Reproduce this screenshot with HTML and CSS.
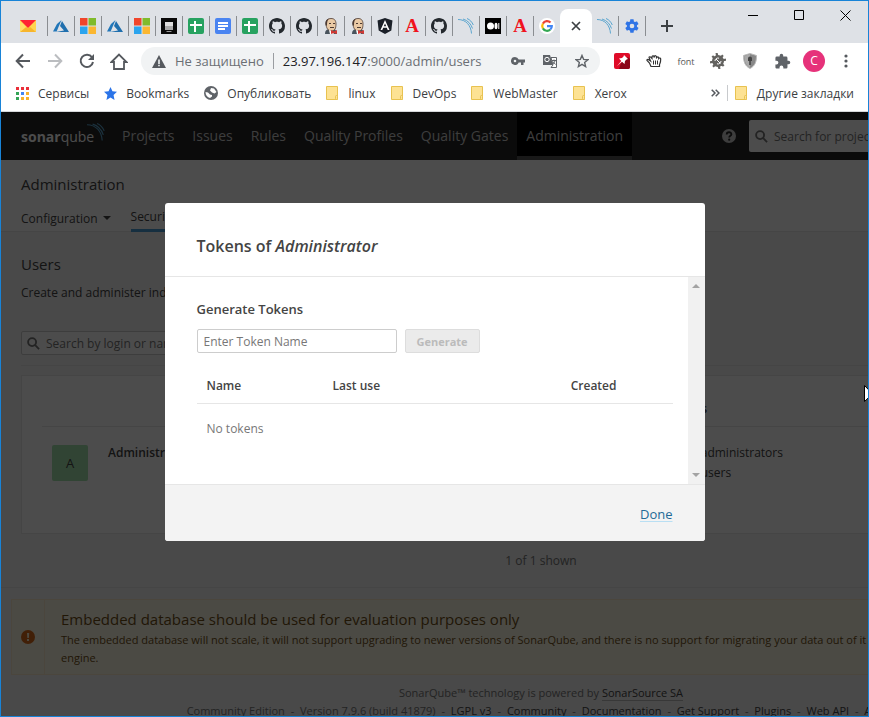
FILE: index.html
```html
<!DOCTYPE html>
<html lang="ru">
<head>
<meta charset="utf-8">
<title>Users - Administration</title>
<link rel="stylesheet" href="styles.css">
</head>
<body>
<svg class="defs" aria-hidden="true">
  <symbol id="mail" viewBox="0 0 16 12"><path fill="#ffd44f" d="M0 0h16v12H0z"/><path fill="#f7b52c" d="M0 12l6-5 2 1.500 2-1.500 6 5z"/><path fill="#ffdd69" d="M0 1l6 6-6 5z"/><path fill="#f23" d="M0 0h16L8 8z"/></symbol>
  <symbol id="azure" viewBox="0 0 16 16"><path fill="#2277b9" d="M8.500 2L4 6 0 13.500h3.600z"/><path fill="#1f6fae" d="M9 3l7 11H3l8-1.500L7 8z"/></symbol>
  <symbol id="ms" viewBox="0 0 16 16"><path fill="#f0452b" d="M0 0h7.500v7.500H0z"/><path fill="#80bb2b" d="M8.500 0H16v7.500H8.500z"/><path fill="#2ba4ee" d="M0 8.500h7.500V16H0z"/><path fill="#fbb731" d="M8.500 8.500H16V16H8.500z"/></symbol>
  <symbol id="device" viewBox="0 0 16 16"><path fill="#090909" d="M0 0h16v16H0z"/><path fill="#ddd" d="M4 4h8v4H4z"/><path fill="#aaa" d="M4 8h8v4H4z"/><path fill="#999" d="M5.500 13h5v1h-5z"/></symbol>
  <symbol id="sheet" viewBox="0 0 16 16"><rect width="16" height="16" rx="2" fill="#27a260"/><path fill="#fff" d="M6 3h2v3h6v2H8v6H6V8H2V6h4z"/></symbol>
  <symbol id="doc" viewBox="0 0 16 16"><rect width="16" height="16" rx="2" fill="#4a84f1"/><path fill="#fff" d="M3 4h10v2H3zm0 3h10v2H3zm0 3h7v2H3z"/></symbol>
  <symbol id="github" viewBox="0 0 16 16"><path fill="#24292e" d="M8 0C3.580 0 0 3.580 0 8c0 3.540 2.290 6.530 5.470 7.590.4.070.55-.17.55-.38 0-.19-.01-.82-.01-1.490-2.010.37-2.530-.49-2.690-.94-.09-.23-.48-.94-.82-1.130-.28-.15-.68-.52-.01-.53.63-.01 1.080.58 1.230.82.72 1.210 1.870.87 2.330.66.07-.52.28-.87.51-1.070-1.780-.2-3.640-.89-3.640-3.950 0-.87.31-1.590.82-2.150-.08-.2-.36-1.020.08-2.120 0 0 .67-.21 2.200.82.64-.18 1.320-.27 2-.27s1.360.09 2 .27c1.530-1.040 2.200-.82 2.200-.82.44 1.100.16 1.920.08 2.120.51.56.82 1.270.82 2.150 0 3.070-1.870 3.750-3.650 3.950.29.25.54.73.54 1.480 0 1.070-.01 1.930-.01 2.200 0 .21.15.46.55.38A8.010 8.010 0 0 0 16 8c0-4.420-3.580-8-8-8z"/></symbol>
  <symbol id="jenkins" viewBox="0 0 16 16"><path fill="#49545d" d="M2 16c0-4 2-5 6-5s6 1 6 5z"/><path fill="#e9c9a4" stroke="#4c3a32" stroke-width=".8" d="M3 5c0-3 2-4.500 5-4.500S13 2 13 6c0 4-1 7-4.500 7C5 13 3 10 3 5z"/><path fill="#4c3a32" d="M3 8C1.500 5 3 1 6 .8 4.500 2 4 4 4 7zM6 5h2v1H6zm4 0h2v1h-2zM7 9h4v1H7z"/><path fill="#fff" d="M6 12l3 1 2 3H7z"/><path fill="#d33833" d="M8 12l3 1.500 3-1.500v4l-3-1-3 1z"/></symbol>
  <symbol id="angular" viewBox="0 0 16 16"><path fill="#1b2028" d="M8 0l7.500 2.600-1.200 10L8 16l-6.300-3.400-1.200-10z"/><path fill="#fff" fill-rule="evenodd" d="M8 2l4.500 10h-1.800l-.9-2.200H6.200L5.300 12H3.500zm0 3.500L6.800 8.300h2.400z"/></symbol>
  <symbol id="sonar" viewBox="0 0 16 16"><g fill="none" stroke="#5ba5cf" stroke-width="1"><path d="M0 1.500c8 0 13 6 13.500 14"/><path d="M5 1c5 1.500 8 5 9.500 9.500"/><path d="M9 .5c3 1.200 5 3.500 6.300 6.500"/></g></symbol>
  <symbol id="medium" viewBox="0 0 16 16"><path d="M0 0h16v16H0z"/><circle cx="5.500" cy="8" r="3.500" fill="#fff"/><ellipse cx="11" cy="8" rx="1.500" ry="3.300" fill="#fff"/><path fill="#fff" d="M13.300 5h1v6h-1z"/></symbol>
  <symbol id="google" viewBox="0 0 16 16"><circle cx="8" cy="8" r="8" fill="#fff"/><g fill="none" stroke-width="2.200"><path stroke="#ea4335" d="M3.900 5.600A4.800 4.800 0 0 1 11.500 4.600"/><path stroke="#fbbc05" d="M3.900 5.600a4.800 4.800 0 0 0 0 4.800"/><path stroke="#34a853" d="M3.900 10.400a4.800 4.800 0 0 0 7.400 1.100"/><path stroke="#4285f4" d="M11.300 11.500A4.700 4.700 0 0 0 12.800 8.200H8"/></g></symbol>
  <symbol id="gear" viewBox="0 0 24 24"><path fill="#2f74e6" fill-rule="evenodd" d="M19.400 13a7.500 7.500 0 0 0 0-2l2.100-1.600c.2-.2.300-.4.100-.7l-2-3.400c-.1-.3-.4-.3-.6-.2l-2.500 1a7.300 7.300 0 0 0-1.700-1L14.400 2.400c0-.2-.2-.4-.5-.4h-4c-.3 0-.5.200-.5.400L9 5.100c-.6.200-1.200.6-1.700 1l-2.500-1c-.2-.1-.5 0-.6.200l-2 3.400c-.2.300-.1.500.1.700L4.400 11a7.500 7.500 0 0 0 0 2l-2.100 1.600c-.2.200-.3.400-.1.700l2 3.400c.1.300.4.300.6.200l2.500-1c.5.400 1.100.8 1.700 1l.4 2.700c0 .2.200.4.500.4h4c.3 0 .5-.2.500-.4l.4-2.700c.6-.2 1.200-.6 1.700-1l2.500 1c.2.100.5 0 .6-.2l2-3.400c.2-.3.100-.5-.1-.7zM12 15.500a3.500 3.500 0 1 1 0-7 3.500 3.500 0 0 1 0 7z"/></symbol>
  <symbol id="folder" viewBox="0 0 13 15"><path fill="#fde293" stroke="#e8c250" d="M.5.500h11v13H.5z"/><rect x="9.500" y="9.500" width="2" height="4" rx="1" fill="#fde293" stroke="#e8c250"/></symbol>
  <symbol id="search" viewBox="0 0 14 14"><g fill="none" stroke="currentColor" stroke-width="2"><circle cx="5.500" cy="5.500" r="4.300"/><path d="M8.800 8.800L13 13"/></g></symbol>
</svg>

<div class="browser">
  <header class="tabstrip">
    <nav class="tabs" aria-label="Tabs">
      <span class="tab first"><svg width="16" height="12"><use href="#mail"/></svg></span>
      <span class="tab"><svg class="fav"><use href="#azure"/></svg></span>
      <span class="tab"><svg class="fav"><use href="#ms"/></svg></span>
      <span class="tab"><svg class="fav"><use href="#azure"/></svg></span>
      <span class="tab"><svg class="fav"><use href="#ms"/></svg></span>
      <span class="tab"><svg class="fav"><use href="#device"/></svg></span>
      <span class="tab"><svg class="fav"><use href="#sheet"/></svg></span>
      <span class="tab"><svg class="fav"><use href="#doc"/></svg></span>
      <span class="tab"><svg class="fav"><use href="#sheet"/></svg></span>
      <span class="tab"><svg class="fav"><use href="#github"/></svg></span>
      <span class="tab"><svg class="fav"><use href="#github"/></svg></span>
      <span class="tab"><svg class="fav"><use href="#jenkins"/></svg></span>
      <span class="tab"><svg class="fav"><use href="#jenkins"/></svg></span>
      <span class="tab"><svg class="fav"><use href="#angular"/></svg></span>
      <span class="tab letter">A</span>
      <span class="tab"><svg class="fav"><use href="#github"/></svg></span>
      <span class="tab"><svg class="fav"><use href="#sonar"/></svg></span>
      <span class="tab"><svg class="fav"><use href="#medium"/></svg></span>
      <span class="tab letter">A</span>
      <span class="tab last"><svg class="fav"><use href="#google"/></svg></span>
      <button class="tab active" aria-label="Close tab"><svg width="10" height="10" viewBox="0 0 10 10"><path d="M1 1l8 8M9 1L1 9" stroke="#3c4043" stroke-width="1.700"/></svg></button>
      <span class="tab"><svg class="fav"><use href="#sonar"/></svg></span>
      <span class="tab"><svg class="fav"><use href="#gear"/></svg></span>
      <button class="newtab" aria-label="New tab"><svg width="12" height="12" viewBox="0 0 12 12"><path d="M6 0v12M0 6h12" stroke="#3c4043" stroke-width="2"/></svg></button>
    </nav>
    <div class="winbtns">
      <button aria-label="Minimize"><svg width="11" height="11"><path d="M0 5.500h10" stroke="#000"/></svg></button>
      <button aria-label="Maximize"><svg width="11" height="11"><path d="M.5.500h9v9h-9z" fill="none" stroke="#000"/></svg></button>
      <button aria-label="Close"><svg width="11" height="11"><path d="M.5.500l10 10M10.500.500l-10 10" stroke="#000"/></svg></button>
    </div>
  </header>

  <div class="toolbar">
    <button class="tool" aria-label="Back"><svg width="16" height="16" viewBox="0 0 16 16"><path d="M15 8H2M8 1.500L1.700 8 8 14.500" fill="none" stroke="#55595e" stroke-width="2"/></svg></button>
    <button class="tool" aria-label="Forward"><svg width="16" height="16" viewBox="0 0 16 16"><path d="M1 8h13M8 1.500L14.300 8 8 14.500" fill="none" stroke="#bbbdc0" stroke-width="2"/></svg></button>
    <button class="tool" aria-label="Reload"><svg width="16" height="16" viewBox="0 0 16 16"><path d="M13 4.300A6.200 6.200 0 1 0 14 9" fill="none" stroke="#55595e" stroke-width="2"/><path d="M15 1v6H9z" fill="#55595e"/></svg></button>
    <button class="tool" aria-label="Home"><svg width="18" height="17" viewBox="0 0 18 17"><path d="M1.500 9L9 1.500 16.500 9H14v7H4V9z" fill="none" stroke="#55595e" stroke-width="1.800"/></svg></button>
    <div class="omnibox">
      <svg width="14" height="13" viewBox="0 0 14 13"><path fill="#55595e" d="M7 0l7 13H0z"/><path fill="#f1f3f4" d="M6.200 4.500h1.600V9H6.200zm0 5.200h1.600v1.500H6.200z"/></svg>
      <span class="insecure">Не защищено</span>
      <span class="rule"></span>
      <span class="url"><span class="host">23.97.196.147</span>:9000/admin/users</span>
      <svg width="14" height="8" viewBox="0 0 14 8"><path fill="#5f6368" fill-rule="evenodd" d="M4 0a4 4 0 0 1 3.700 2.500H14v3h-1.500V8H10V5.500H7.700A4 4 0 1 1 4 0zm0 2.700a1.300 1.300 0 1 0 0 2.600 1.300 1.300 0 0 0 0-2.600z"/></svg>
      <svg width="14" height="14" viewBox="0 0 14 14"><path fill="#5f6368" d="M0 1h7l3 10H0z"/><path fill="#fff" stroke="#5f6368" d="M8 3.500h5.500v10H8L10 11z"/><circle cx="4" cy="5.500" r="2.200" fill="none" stroke="#fff"/><path stroke="#5f6368" fill="none" d="M9 6.500h4M11 5.500v1M12.500 6.500l-3 4M10 7.500l2.500 3"/></svg>
      <svg width="14" height="14" viewBox="0 0 24 24"><path d="M12 2.500l2.800 6.700 7.200.6-5.500 4.700 1.700 7.100L12 17.800l-6.200 3.800 1.700-7.100L2 9.800l7.200-.6z" fill="none" stroke="#5f6368" stroke-width="2.400"/></svg>
    </div>
    <button class="tool" aria-label="Pin"><svg width="16" height="16" viewBox="0 0 16 16"><rect width="16" height="16" rx="2" fill="#df0b28"/><path fill="#8c0417" d="M7 10l7-6 2 2v8a2 2 0 0 1-2 2H5z"/><path fill="#fff" d="M10 2l4 4-1.500.5L11 8l-.5 3L8 8.700 3 13l4.300-5L5 5.500 8 5l1.500-1.500z"/></svg></button>
    <button class="tool" aria-label="Grab"><svg width="17" height="14" viewBox="0 0 17 14"><path d="M5 12.500L3.500 9 1 6.500c-.5-1 .8-1.500 1.800-.8L4.500 7 3 3.500c0-1 1.500-1 2 0L6 4.500V2.500c.5-1 1.800-.8 2 0v1l.5-1.300c.5-.8 1.700-.5 1.900.3l.1 1.200.6-.5c.7-.6 1.600 0 1.600.8v.5c.8-1 2-.3 2 .5 0 4-.7 4-1.200 5.500v2z" fill="#fff" stroke="#333" stroke-width="1.200"/><path d="M7.500 6.500v4M9.500 6.500v4M11.500 6.500v4" stroke="#333"/></svg></button>
    <button class="tool font">font</button>
    <button class="tool" aria-label="Settings"><svg width="16" height="16" viewBox="0 0 16 16"><circle cx="8" cy="8" r="6" fill="#63625f"/><g stroke="#63625f" stroke-width="2.200"><path d="M6.500 0l.8 3M8.700 13l.8 3M0 9.500l3-.8M13 7.300l3-.8M2.300 3l2 2M11.700 11l2 2M3 13.700l2-2M11 4.300l2-2"/></g><path d="M5 8a3 3 0 0 1 4-2.800M11 8a3 3 0 0 1-4 2.800M6 6l4.500 4.500" stroke="#fff" fill="none"/></svg></button>
    <button class="tool" aria-label="Shield"><svg width="14" height="16" viewBox="0 0 14 16"><path d="M7 .5l6.500 2C13.500 9 12 13 7 15.500 2 13 .5 9 .5 2.500z" fill="#888" stroke="#bbb"/><path d="M7 1v14C3 12.500 1.500 9 1.200 3z" fill="#aaa"/><path d="M6.200 7h1.600v5H6.200zM5 5.500a2 2 0 1 1 4 0V8H5z" fill="#444"/></svg></button>
    <button class="tool" aria-label="Extensions"><svg width="17" height="17" viewBox="0 0 24 24"><path fill="#5f6368" d="M20.500 11H19V7a2 2 0 0 0-2-2h-4V3.500a2.500 2.500 0 0 0-5 0V5H4a2 2 0 0 0-2 2v3.800h1.500a2.700 2.700 0 0 1 0 5.400H2V20c0 1.100.9 2 2 2h3.800v-1.500a2.700 2.700 0 0 1 5.400 0V22H17a2 2 0 0 0 2-2v-4h1.500a2.500 2.500 0 0 0 0-5z"/></svg></button>
    <button class="tool" aria-label="Profile"><span class="profile">C</span></button>
    <button class="tool" aria-label="Menu"><svg width="4" height="14"><g fill="#55595e"><circle cx="2" cy="2" r="1.600"/><circle cx="2" cy="7" r="1.600"/><circle cx="2" cy="12" r="1.600"/></g></svg></button>
  </div>

  <nav class="bookmarks" aria-label="Bookmarks">
    <a href="#"><svg width="13" height="13"><g><path fill="#ea2f39" d="M0 0h3v3H0zM5 0h3v3H5zM10 0h3v3h-3z"/><path fill="#33a456" d="M0 5h3v3H0zM0 10h3v3H0z"/><path fill="#4285f4" d="M5 5h3v3H5z"/><path fill="#f8b12c" d="M10 5h3v3h-3zM5 10h3v3H5zM10 10h3v3h-3z"/></g></svg>Сервисы</a>
    <a href="#"><svg width="13" height="13" viewBox="0 0 20 20"><path fill="#2b74e8" d="M10 0l3 6.700 7 .7-5.300 4.800L16.200 20 10 16l-6.200 4 1.500-7.800L0 7.400l7-.7z"/></svg>Bookmarks</a>
    <a href="#"><svg width="14" height="14" viewBox="0 0 14 14"><circle cx="7" cy="7" r="7" fill="#5f6368"/><path fill="#fff" d="M1.500 6l2.500.5L6 8.500l2 .5v1.500L6 12C3.500 11.500 1.500 9 1.500 6zM7 2l3 .5 2.500 3.500-2 1.500L8 6.500 6 4.500z"/></svg>Опубликовать</a>
    <a href="#"><svg class="folder"><use href="#folder"/></svg>linux</a>
    <a href="#"><svg class="folder"><use href="#folder"/></svg>DevOps</a>
    <a href="#"><svg class="folder"><use href="#folder"/></svg>WebMaster</a>
    <a href="#"><svg class="folder"><use href="#folder"/></svg>Xerox</a>
    <button class="more" aria-label="More bookmarks"><svg width="9" height="8" viewBox="0 0 9 8"><path d="M.7.700L4 4 .7 7.300M4.700.700L8 4 4.700 7.300" fill="none" stroke="#55595e" stroke-width="1.500"/></svg></button>
    <a class="other" href="#"><svg class="folder"><use href="#folder"/></svg>Другие закладки</a>
  </nav>

  <div class="viewport">
    <div class="page">
      <header class="global">
        <a class="logo" href="#"><b>sonar</b>qube<svg width="18" height="18" viewBox="0 0 16 16"><use href="#sonar"/></svg></a>
        <nav class="menu">
          <a href="#">Projects</a><a href="#">Issues</a><a href="#">Rules</a><a href="#">Quality Profiles</a><a href="#">Quality Gates</a><a class="current" href="#">Administration</a>
        </nav>
        <div class="right">
          <svg width="14" height="14" viewBox="0 0 14 14"><circle cx="7" cy="7" r="7" fill="#ccc"/><path d="M4.700 5.500C4.700 2.500 9.400 2.600 9.400 5.200 9.400 6.800 7.200 6.700 7.200 8.500" stroke="#262626" stroke-width="1.800" fill="none"/><circle cx="7.200" cy="10.700" r="1.100" fill="#262626"/></svg>
          <label class="find"><svg width="13" height="13"><use href="#search"/></svg><input type="search" aria-label="Search" placeholder="Search for projects, sub-projects and files..."></label>
        </div>
      </header>
      <header class="context">
        <h1>Administration</h1>
        <nav><a href="#">Configuration<i class="caret"></i></a><a class="current" href="#">Security<i class="caret"></i></a></nav>
      </header>
      <main class="users">
        <h2>Users</h2>
        <p>Create and administer individual users.</p>
        <div class="filters">
          <label class="find small"><svg width="13" height="13"><use href="#search"/></svg><input type="search" aria-label="Search users" placeholder="Search by login or name..."></label>
        </div>
        <div class="panel">
          <table>
            <thead><tr><th></th><th></th><th>SCM Accounts</th><th>Groups</th></tr></thead>
            <tbody><tr><td><span class="avatar">A</span></td><td><strong>Administrator</strong></td><td></td><td>sonar-administrators<br>sonar-users</td></tr></tbody>
          </table>
        </div>
        <p class="count">1 of 1 shown</p>
      </main>
      <footer>
        <div class="warning">
          <div class="sign"><svg width="14" height="14"><circle cx="7" cy="7" r="7" fill="#d9691a"/><path fill="#fff3d6" d="M6 3h2.200l-.3 5H6.300zM6 9h2v2H6z"/></svg></div>
          <div class="message">
            <h3>Embedded database should be used for evaluation purposes only</h3>
            <p>The embedded database will not scale, it will not support upgrading to newer versions of SonarQube, and there is no support for migrating your data out of it into a different database engine.</p>
          </div>
        </div>
        <p>SonarQube™ technology is powered by <a class="lined" href="#">SonarSource SA</a></p>
        <p class="links">Community Edition <i>-</i> Version 7.9.6 (build 41879) <i>-</i> <a href="#">LGPL v3</a> <i>-</i> <a href="#">Community</a> <i>-</i> <a href="#">Documentation</a> <i>-</i> <a href="#">Get Support</a> <i>-</i> <a href="#">Plugins</a> <i>-</i> <a href="#">Web API</a> <i>-</i> <a href="#">About</a></p>
      </footer>
    </div>

    <div class="overlay">
      <section class="modal" role="dialog" aria-labelledby="tokens-title">
        <header><h2 id="tokens-title">Tokens of <em>Administrator</em></h2></header>
        <div class="body">
          <div class="content">
            <h3>Generate Tokens</h3>
            <form>
              <input type="text" aria-label="Token name" placeholder="Enter Token Name">
              <button type="button" disabled>Generate</button>
            </form>
            <table>
              <thead><tr><th class="name">Name</th><th class="last">Last use</th><th class="created">Created</th><th></th></tr></thead>
              <tbody><tr><td colspan="4">No tokens</td></tr></tbody>
            </table>
          </div>
          <div class="scrollbar" aria-hidden="true"><i class="up"></i><i class="down"></i></div>
        </div>
        <footer><a href="#">Done</a></footer>
      </section>
    </div>
    <svg class="cursor" width="12" height="19" viewBox="0 0 12 19" aria-hidden="true"><path d="M.5.500v16l3.700-3.500 2.300 5.300 2.300-1-2.300-5.300h5z" fill="#fff" stroke="#000"/></svg>
  </div>
</div>
</body>
</html>
```

FILE: styles.css
```css
* { box-sizing: border-box; }
body { margin: 0; font-family: "Open Sans", "Noto Sans", sans-serif; font-size: 12px; color: #444; }
h1, h2, h3, p { margin: 0; font-weight: 400; }
a { color: inherit; text-decoration: none; }
button { padding: 0; border: 0; background: none; font-family: inherit; color: inherit; }
input { font-family: inherit; font-size: 12px; color: #444; min-width: 0; }
svg { flex: none; display: block; }
.defs { display: none; }

.browser { display: flex; flex-direction: column; height: 100vh; border: 1px solid #1883d7; overflow: hidden; background: #fff; }

/* Tab strip */
.tabstrip { display: flex; justify-content: space-between; background: #dee1e6; height: 42px; flex: none; }
.tabs { display: flex; padding: 8px 0 0 7px; }
.tab { position: relative; display: flex; align-items: center; justify-content: center; width: 27px; height: 34px; padding-right: 1px; }
.tab::after { content: ""; position: absolute; right: 0; top: 7px; height: 20px; width: 1px; background: #8a8d91; }
.tab.first { width: 40px; padding: 0; }
.tab.last { width: 26px; padding: 0; }
.tab.last::after, .tab.active::after { display: none; }
.tab.active { width: 32px; padding: 0; background: #fff; border-radius: 8px 8px 0 0; }
.fav { width: 16px; height: 16px; }
.letter { color: #f0141e; font: bold 19px/34px "Liberation Serif", serif; }
.newtab { width: 42px; display: flex; align-items: center; justify-content: center; }
.winbtns { display: flex; height: 29px; }
.winbtns button { width: 46px; display: flex; align-items: center; justify-content: center; }

/* Toolbar */
.toolbar { display: flex; align-items: center; height: 36px; flex: none; padding: 0 6px; }
.tool { width: 32px; height: 32px; display: flex; align-items: center; justify-content: center; flex: none; }
.font { font-size: 9px; color: #555; }
.profile { width: 22px; height: 22px; border-radius: 50%; background: #e6327a; color: #fff; font-size: 12px; line-height: 22px; }
.omnibox { flex: 1; display: flex; align-items: center; height: 28px; margin: 0 6px; padding: 0 11px; border-radius: 14px; background: #f1f3f4; font-size: 13px; color: #6b6f74; white-space: nowrap; gap: 18px; }
.insecure { margin-left: -9px; }
.rule { width: 1px; height: 16px; background: #9a9da1; margin: 0 -9px; }
.url { flex: 1; }
.host { color: #202124; }

/* Bookmarks */
.bookmarks { display: flex; align-items: center; gap: 15px; height: 33px; flex: none; padding: 0 14px 4px 15px; border-bottom: 1px solid #d5d7da; color: #3c4043; white-space: nowrap; }
.bookmarks a { display: flex; align-items: center; gap: 9px; }
.folder { width: 13px; height: 15px; }
.more { margin-left: auto; }
.other { position: relative; }
.other::before { content: ""; position: absolute; left: -8px; top: 0; width: 1px; height: 16px; background: #c8cacd; }

/* Page */
.viewport { position: relative; flex: 1; min-height: 0; overflow: hidden; background: #f3f3f3; }
.page { min-width: 1080px; }
.global { display: flex; align-items: center; height: 48px; padding-left: 20px; background: #262626; color: #ccc; }
.logo { display: flex; align-items: center; width: 92px; color: #fff; font-size: 14px; }
.logo svg { margin: 0 0 8px -7px; }
.menu { display: flex; font-size: 14px; }
.menu a { height: 48px; line-height: 48px; padding: 0 9px; }
.menu .current { background: #000; border-bottom: 4px solid #555; }
.right { display: flex; align-items: center; gap: 13px; width: 359px; margin-left: auto; }
.find { display: flex; align-items: center; gap: 6px; flex: 1; height: 32px; padding: 0 6px; border-radius: 2px; background: #fff; color: #777; }
.find input { flex: 1; border: 0; outline: 0; background: none; padding: 0; }
.find input::placeholder { color: #777; opacity: 1; }
.context { background: #fff; height: 72px; padding: 12px 20px 0; border-bottom: 1px solid #e6e6e6; }
.context h1 { font-size: 15px; line-height: 24px; }
.context nav { display: flex; gap: 20px; margin-top: 8px; }
.context nav a { display: flex; align-items: center; gap: 5px; height: 28px; }
.context .current { border-bottom: 3px solid #4b9fd5; }
.caret { border: 4px solid transparent; border-top-color: #444; border-bottom: 0; }
.users { padding: 19px 20px 16px; border-bottom: 1px solid #e6e6e6; }
.users h2 { font-size: 15px; line-height: 26px; }
.users p { line-height: 20px; margin-top: 6px; }
.filters { margin-top: 28px; padding-bottom: 10px; border-bottom: 1px solid #e6e6e6; }
.find.small { width: 300px; height: 24px; padding: 0 5px; border: 1px solid #cdcdcd; }
.panel { margin-top: 9px; padding: 15px 20px 50px; background: #fff; border: 1px solid #e6e6e6; }
.panel table { width: 100%; border-collapse: collapse; table-layout: fixed; }
.panel th { height: 35px; padding: 0 10px; text-align: left; font-weight: 600; border-bottom: 1px solid #e6e6e6; }
.panel th:nth-child(1) { width: 56px; }
.panel th:nth-child(2) { width: 320px; }
.panel th:nth-child(3) { width: 237px; }
.panel td { padding: 16px 10px 0; vertical-align: top; line-height: 20px; }
.panel strong { font-weight: 600; }
.avatar { display: block; width: 36px; height: 36px; border-radius: 2px; background: #a6e3ae; text-align: center; font-size: 13px; line-height: 36px; margin-top: 2px; }
.users .count { margin-top: 17px; text-align: center; color: #777; }
.page > footer { text-align: center; font-size: 11px; line-height: 18px; color: #777; }
.page > footer a { color: #444; }
.page > footer .lined { border-bottom: 1px solid #bbb; }
.links { white-space: nowrap; }
.links i { margin: 0 3px; font-style: normal; }
.warning { display: flex; margin: 11px 10px 9px; border: 1px solid #faebcc; background: #fcf8e3; color: #6f4f17; text-align: left; }
.sign { display: flex; align-items: center; justify-content: center; width: 33px; border-right: 1px solid #faebcc; }
.message { flex: 1; padding: 7px 60px 7px 16px; }
.message h3 { font-size: 15px; line-height: 24px; }

/* Dialog */
.overlay { position: absolute; inset: 0; background: rgba(0, 0, 0, .7); padding-top: 91px; }
.modal { width: 540px; max-width: 100%; margin: 0 auto; background: #fff; border-radius: 3px; overflow: hidden; }
.modal header { padding: 35px 32px 22px; border-bottom: 1px solid #e6e6e6; }
.modal h2 { font-size: 16px; line-height: 16px; font-weight: 600; }
.body { display: flex; height: 207px; }
.content { flex: 1; padding: 22px 15px 0 32px; }
.content h3 { font-size: 13px; line-height: 20px; font-weight: 600; }
.content form { display: flex; gap: 8px; margin-top: 10px; }
.content input { width: 200px; height: 24px; padding: 0 6px; border: 1px solid #cdcdcd; border-radius: 2px; }
.content input::placeholder { color: #777; opacity: 1; }
.content form button { width: 75px; height: 24px; border: 1px solid #ddd; border-radius: 2px; background: #ebebeb; color: #bbb; font-size: 11px; font-weight: 700; }
.content table { width: 100%; margin-top: 16px; border-collapse: collapse; table-layout: fixed; }
.content th { height: 34px; padding: 0 10px; text-align: left; font-size: 12px; font-weight: 600; border-bottom: 1px solid #e6e6e6; }
.content .name { width: 126px; }
.content .last { width: 154px; }
.content .created { width: 150px; text-align: right; }
.content td { padding: 16px 10px; line-height: 18px; color: #777; }
.scrollbar { display: flex; flex-direction: column; align-items: center; justify-content: space-between; width: 17px; padding: 7px 0; background: #f1f1f1; }
.up, .down { border: 4px solid transparent; }
.up { border-top: 0; border-bottom-color: #a3a3a3; }
.down { border-bottom: 0; border-top-color: #a3a3a3; }
.modal footer { padding: 21px 32px 19px; border-top: 1px solid #e6e6e6; background: #f3f3f3; text-align: right; font-size: 13px; line-height: 16px; }
.modal footer a { color: #236a97; text-decoration: underline #b9dff3; text-underline-offset: 2px; }
.cursor { position: absolute; left: 863px; top: 273px; }
```
